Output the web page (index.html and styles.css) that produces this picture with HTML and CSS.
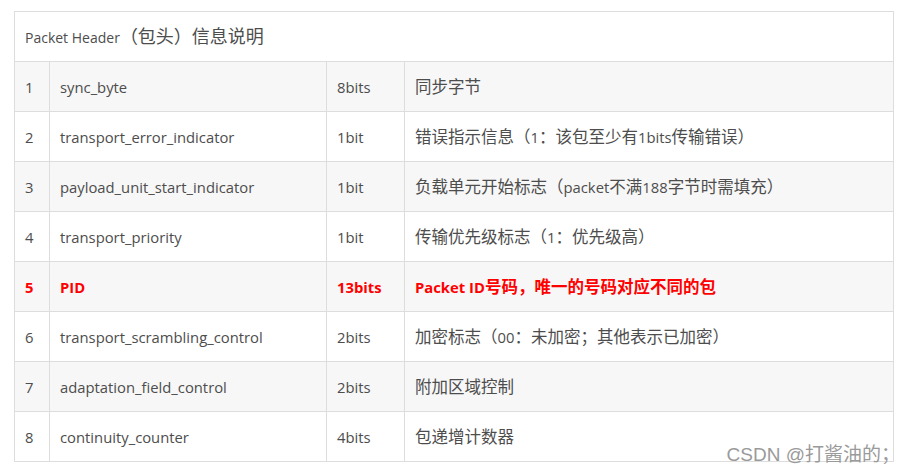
FILE: index.html
```html
<!DOCTYPE html>
<html lang="zh">
<head>
<meta charset="utf-8">
<link rel="stylesheet" href="styles.css">
</head>
<body>
<div class="wrap">
<table class="tbl">
  <colgroup><col class="k1"><col class="k2"><col class="k3"><col class="k4"></colgroup>
  <tr class="head"><td colspan="4"><span class="lat">Packet Header</span><span class="zh-big">（包头）信息说明</span></td></tr>
  <tr class="odd"><td>1</td><td>sync_byte</td><td>8bits</td><td><span class="zh">同步字节</span></td></tr>
  <tr><td>2</td><td>transport_error_indicator</td><td>1bit</td><td><span class="zh">错误指示信息（</span>1<span class="zh">：该包至少有</span>1bits<span class="zh">传输错误）</span></td></tr>
  <tr class="odd"><td>3</td><td>payload_unit_start_indicator</td><td>1bit</td><td><span class="zh">负载单元开始标志（</span>packet<span class="zh">不满</span>188<span class="zh">字节时需填充）</span></td></tr>
  <tr><td>4</td><td>transport_priority</td><td>1bit</td><td><span class="zh">传输优先级标志（</span>1<span class="zh">：优先级高）</span></td></tr>
  <tr class="odd hot"><td>5</td><td>PID</td><td>13bits</td><td>Packet ID<span class="zh">号码，唯一的号码对应不同的包</span></td></tr>
  <tr><td>6</td><td>transport_scrambling_control</td><td>2bits</td><td><span class="zh">加密标志（</span>00<span class="zh">：未加密；其他表示已加密）</span></td></tr>
  <tr class="odd"><td>7</td><td>adaptation_field_control</td><td>2bits</td><td><span class="zh">附加区域控制</span></td></tr>
  <tr><td>8</td><td>continuity_counter</td><td>4bits</td><td><span class="zh">包递增计数器</span></td></tr>
</table>
<div class="mark">CSDN @打酱油的；</div>
</div>
</body>
</html>
```

FILE: styles.css
```css
html, body { margin: 0; padding: 0; background: #fff; }
body { font-family: "Open Sans", "Noto Sans CJK SC", sans-serif; color: #4d4d4d; }
.wrap { position: relative; width: 904px; height: 473px; box-sizing: border-box; padding: 11px 0 0 14px; }
.tbl { border-collapse: collapse; width: 879px; table-layout: fixed; font-size: 14.8px; }
.k1 { width: 35px; }
.k2 { width: 277px; }
.k3 { width: 78px; }
.k4 { width: 489px; }
.tbl td { border: 1px solid #dddddd; height: 49px; padding: 0 0 0 10px; vertical-align: middle; white-space: nowrap; overflow: hidden; line-height: 20px; }
.odd td { background: #f7f7f7; }
.head td { background: #fff; }
.lat { font-size: 14px; }
.zh-big { font-size: 18px; font-family: "Noto Sans CJK SC", sans-serif; }
.zh { font-size: 16.5px; font-family: "Noto Sans CJK SC", sans-serif; }
.hot td { color: #ff0000; font-weight: bold; }
.mark { position: absolute; right: 4px; bottom: 9px; font-family: "Liberation Sans", "Noto Sans CJK SC", sans-serif; font-size: 19px; color: #9a9a9a; line-height: 1; }
```
